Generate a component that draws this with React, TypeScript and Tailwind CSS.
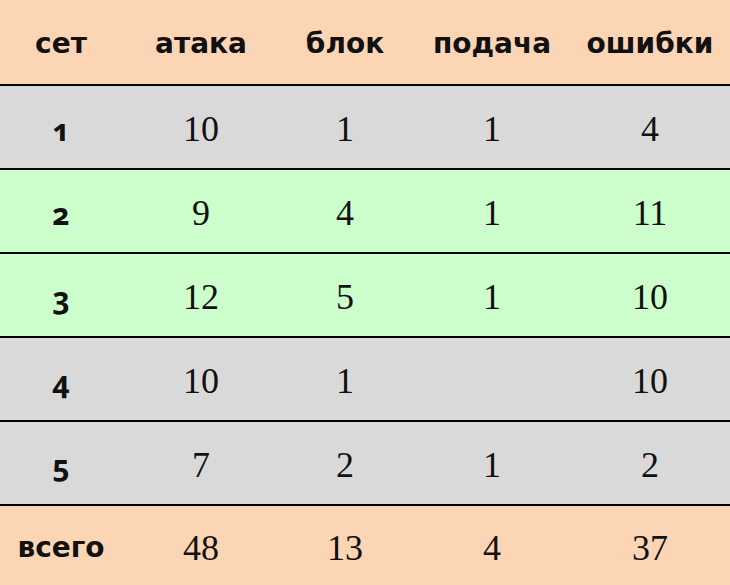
const headers = ['сет', 'атака', 'блок', 'подача', 'ошибки']

type Row = { set: string; values: string[]; tone: 'grey' | 'green' }

const rows: Row[] = [
  { set: '1', values: ['10', '1', '1', '4'], tone: 'grey' },
  { set: '2', values: ['9', '4', '1', '11'], tone: 'green' },
  { set: '3', values: ['12', '5', '1', '10'], tone: 'green' },
  { set: '4', values: ['10', '1', '', '10'], tone: 'grey' },
  { set: '5', values: ['7', '2', '1', '2'], tone: 'grey' },
]

const totals = ['48', '13', '4', '37']

const grid = 'grid grid-cols-[122px_158px_130px_164px_152px] items-center text-center'
const label = "font-['DejaVu_Sans',sans-serif] font-bold text-[28px] text-[#111] pt-1"
const num = "font-['Liberation_Serif',serif] text-[36px] text-[#111] pt-1"

export default function App() {
  return (
    <div className="w-[730px] h-[585px] flex flex-col overflow-hidden bg-[#d9d9d9]">
      <div className={`${grid} h-[84px] shrink-0 bg-[#fcd5b4]`}>
        {headers.map(h => (
          <div key={h} className={label}>{h}</div>
        ))}
      </div>

      {rows.map(r => (
        <div
          key={r.set}
          className={`${grid} h-[84px] shrink-0 border-t-2 border-black ${r.tone === 'green' ? 'bg-[#ccffcc]' : 'bg-[#d9d9d9]'}`}
        >
          <div className="font-['Noto_Sans',sans-serif] font-bold text-[30px] oldstyle-nums text-[#111] pt-1">{r.set}</div>
          {r.values.map((v, i) => (
            <div key={i} className={num}>{v}</div>
          ))}
        </div>
      ))}

      <div className={`${grid} flex-1 border-t-2 border-black bg-[#fcd5b4]`}>
        <div className={label}>всего</div>
        {totals.map((v, i) => (
          <div key={i} className={num}>{v}</div>
        ))}
      </div>
    </div>
  )
}
